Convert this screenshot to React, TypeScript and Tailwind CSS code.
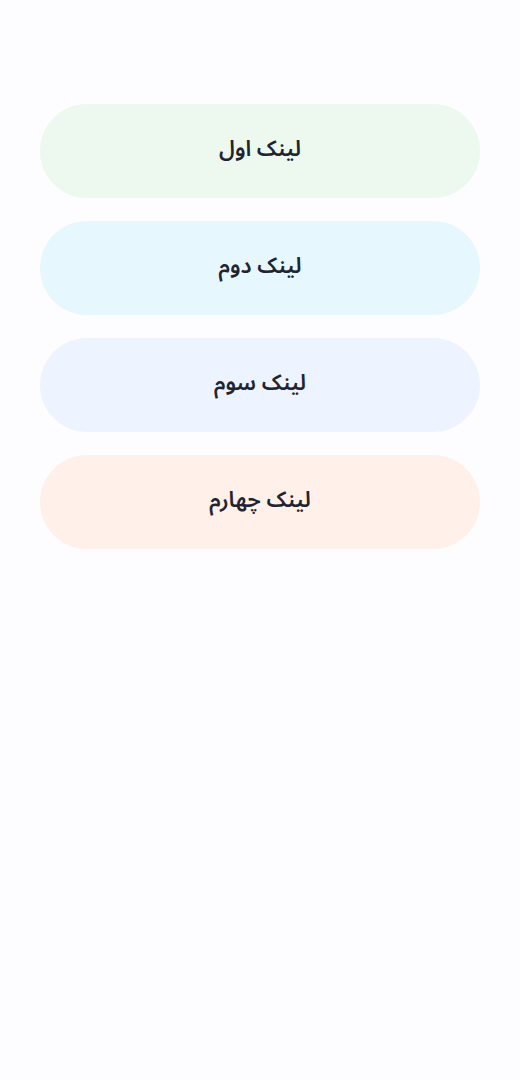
const links = [
  { label: "لینک اول", bg: "bg-[#edf9ee]" },
  { label: "لینک دوم", bg: "bg-[#e6f8fd]" },
  { label: "لینک سوم", bg: "bg-[#eef4ff]" },
  { label: "لینک چهارم", bg: "bg-[#fff0e9]" },
];

export default function App() {
  return (
    <div
      dir="rtl"
      className="min-h-screen bg-[#fdfcfe] px-10 pt-[104px]"
      style={{ fontFamily: '"Noto Sans Arabic", "DejaVu Sans", sans-serif' }}
    >
      <div className="flex flex-col gap-[23px]">
        {links.map((link) => (
          <a
            key={link.label}
            href="#"
            className={`flex h-[94px] items-center justify-center rounded-full pb-1 text-[22px] font-semibold text-[#1f2430] ${link.bg}`}
          >
            {link.label}
          </a>
        ))}
      </div>
    </div>
  );
}
